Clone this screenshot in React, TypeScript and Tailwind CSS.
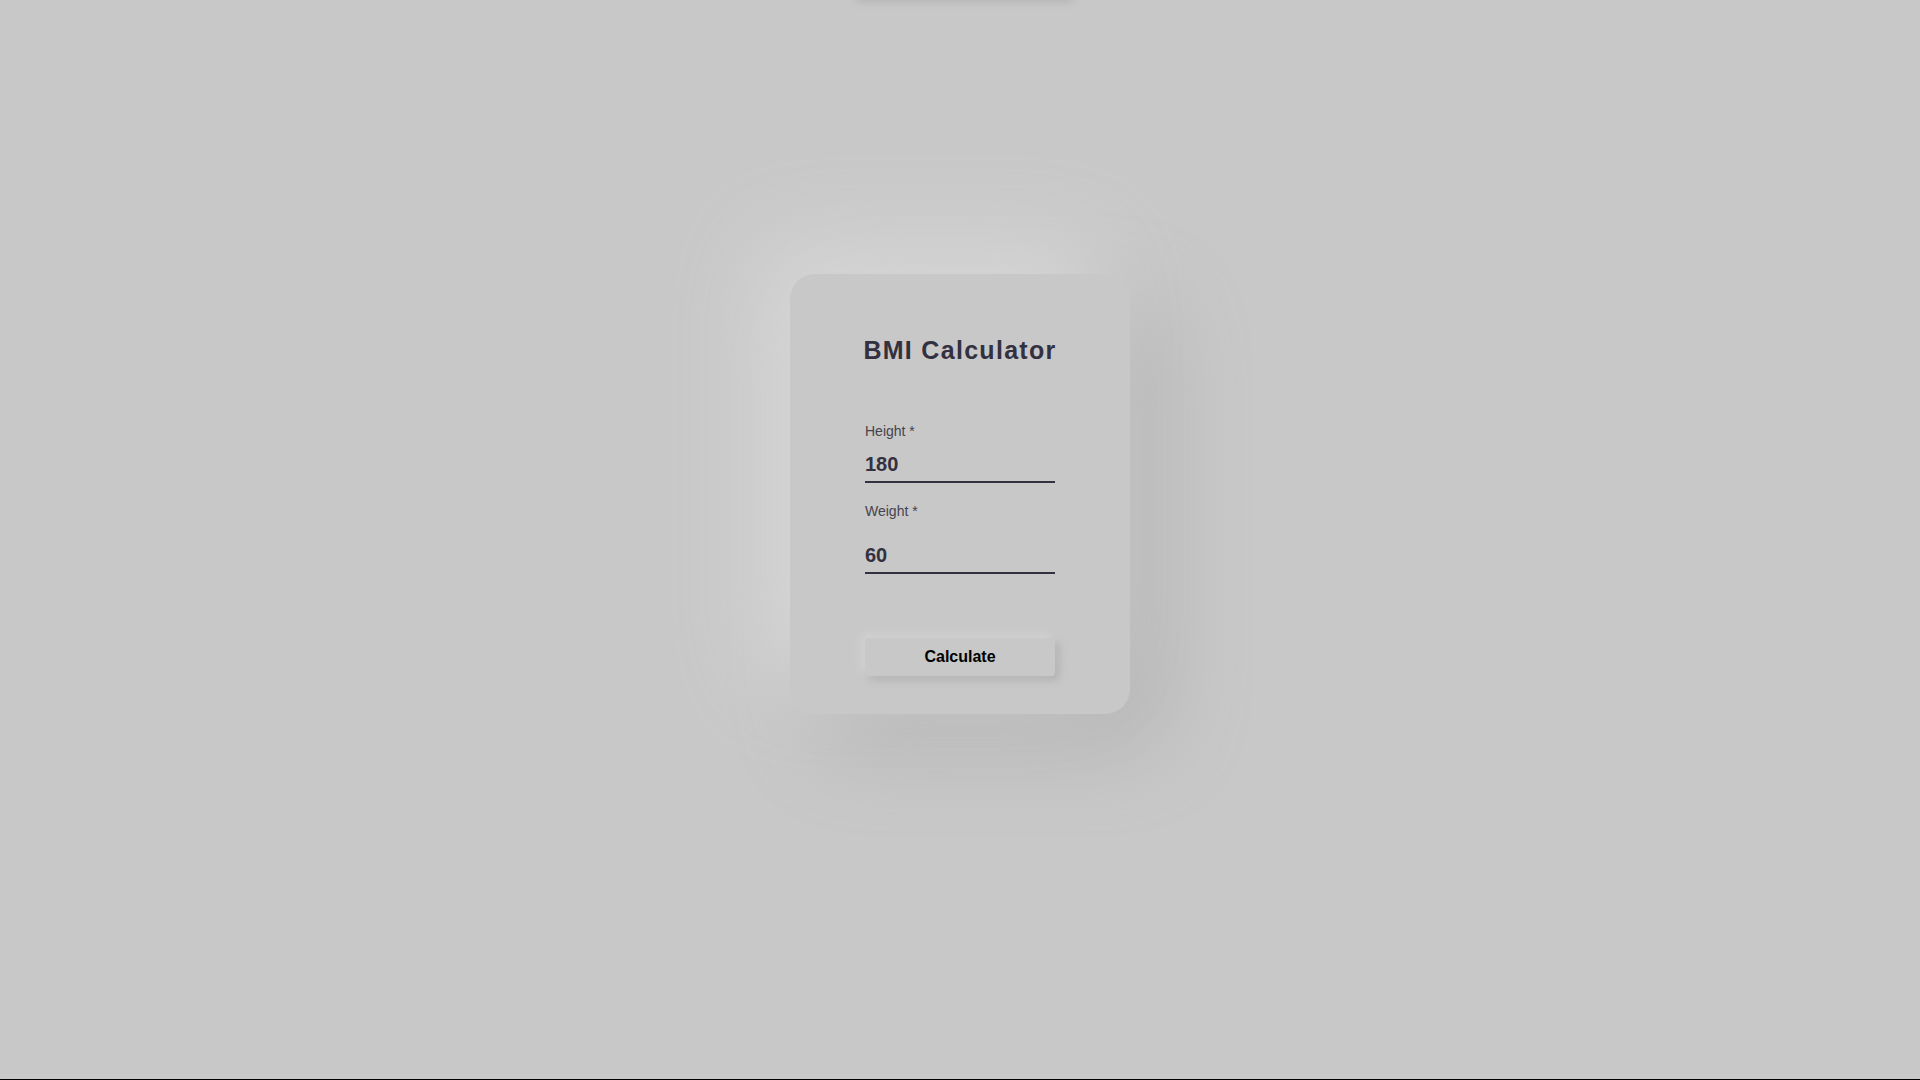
import { useState } from "react";

function Field({ label, value, gap }: { label: string; value: string; gap: string }) {
  const [val, setVal] = useState(value);
  return (
    <div className="flex flex-col">
      <label className="text-[14px] leading-[16px] text-[#45434f]">{label}</label>
      <input
        type="text"
        value={val}
        onChange={(e) => setVal(e.target.value)}
        className={`${gap} h-[36px] w-full bg-transparent border-0 border-b-2 border-[#33313f] p-0 text-[20px] font-bold text-[#33313f] outline-none`}
      />
    </div>
  );
}

export default function App() {
  return (
    <div
      className="relative h-screen overflow-hidden bg-[#c8c8c8] border-b border-black"
      style={{ fontFamily: '"Liberation Sans", Arial, sans-serif' }}
    >
      {/* result panel sitting above the viewport */}
      <div className="absolute left-[851px] top-[-60px] w-[220px] h-[58px] rounded-[6px] bg-[#c8c8c8] shadow-[4px_4px_8px_#b4b4b4]" />

      <div className="flex justify-center pt-[274px]">
        <div className="w-[340px] h-[440px] px-[75px] pt-[61px] bg-[#c8c8c8] rounded-[25px] shadow-[-30px_-30px_90px_#d8d8d8,30px_30px_90px_#b2b2b2]">
          <h1 className="-mx-[30px] whitespace-nowrap text-center text-[25px] leading-[30px] font-bold tracking-[1.3px] text-[#33313f]">
            BMI Calculator
          </h1>
          <div className="mt-[58px] flex flex-col">
            <Field label="Height *" value="180" gap="mt-[8px]" />
            <div className="mt-[20px]">
              <Field label="Weight *" value="60" gap="mt-[19px]" />
            </div>
          </div>
          <button className="mt-[64px] w-full h-[38px] rounded-[4px] bg-[#c8c8c8] text-[16px] font-bold text-black shadow-[-4px_-4px_8px_#d2d2d2,4px_4px_8px_#b0b0b0]">
            Calculate
          </button>
        </div>
      </div>
    </div>
  );
}
